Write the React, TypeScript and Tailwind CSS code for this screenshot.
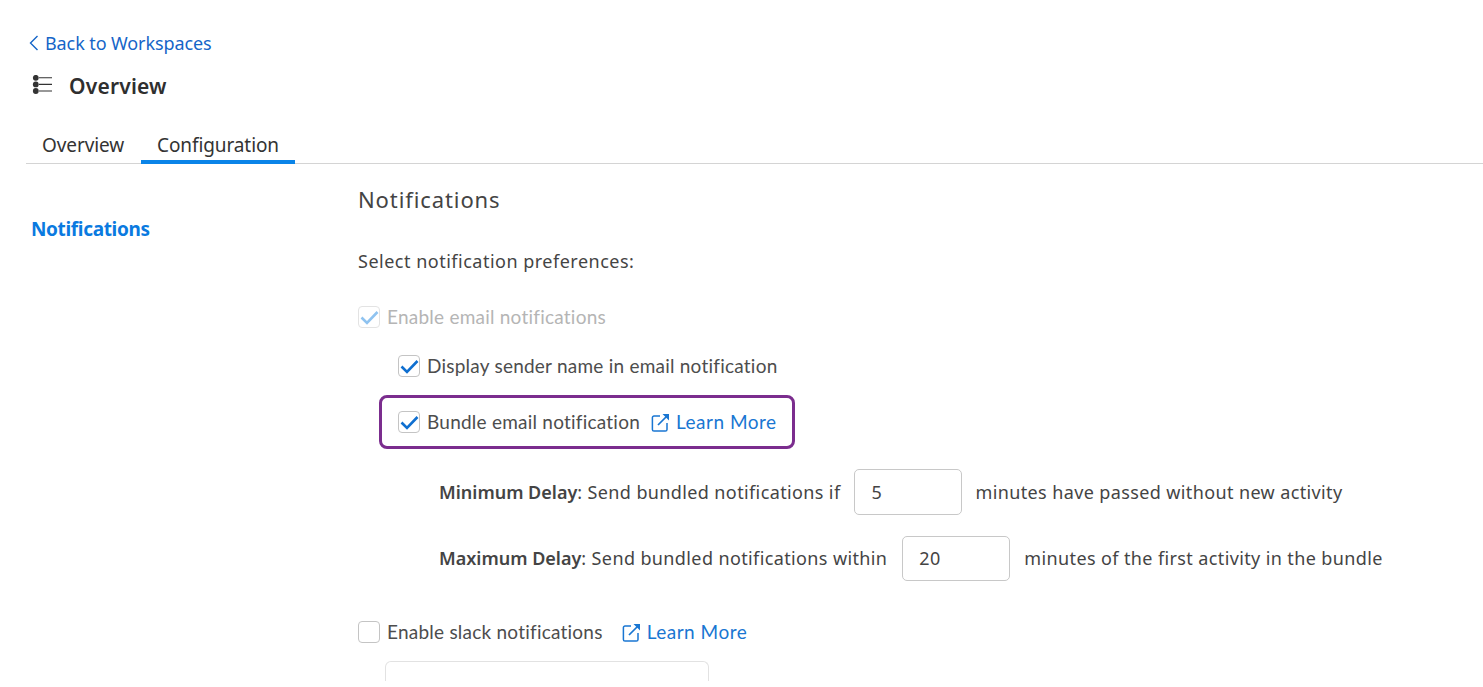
const plex = "font-['Noto_Sans',sans-serif]";
const lato = "font-['Lato',sans-serif]";

const BackChevron = () => (
	<svg width="10" height="16" viewBox="0 0 10 16" fill="none" stroke="currentColor" strokeWidth="1.4" className="ml-[3px]">
		<path d="M8.5 1 L1.5 8 L8.5 15" />
	</svg>
);

const ListIcon = () => (
	<svg width="22" height="22" viewBox="0 0 22 22" className="text-[#333]">
		<circle cx="3.8" cy="2.8" r="2.9" fill="currentColor" />
		<circle cx="3.8" cy="9.4" r="2.9" fill="currentColor" />
		<circle cx="3.8" cy="16" r="2.9" fill="currentColor" />
		<path d="M7 2.8h13M7 9.4h13M7 16h13" stroke="currentColor" strokeWidth="1.1" />
	</svg>
);

const ExternalIcon = () => (
	<svg width="19" height="19" viewBox="0 0 19 19" fill="none" stroke="#1976d2" strokeWidth="1.5">
		<path d="M9 3H3a1.6 1.6 0 0 0-1.6 1.6v11.8A1.6 1.6 0 0 0 3 18h11.4a1.6 1.6 0 0 0 1.6-1.6V10" />
		<path d="M7 12 L16.5 2.5" strokeWidth="1.7" />
		<path d="M11.5 1h6.5v6.5z" fill="#1976d2" stroke="none" />
	</svg>
);

const Check = ({ checked = true, faded = false }: { checked?: boolean; faded?: boolean }) => (
	<span
		className={`flex h-[22px] w-[22px] shrink-0 items-center justify-center rounded-[4px] border bg-white ${faded ? "border-[#e3e3e3]" : "border-[#c4c4c4]"}`}
	>
		{checked && (
			<svg width="19" height="15" viewBox="0 0 19 15" fill="none">
				<path
					d="M1.5 7.5 L7 13 L17.5 2"
					stroke={faded ? "#8fc3f0" : "#0f6fd0"}
					strokeWidth="2.6"
				/>
			</svg>
		)}
	</span>
);

const LearnMore = () => (
	<span className="flex items-center gap-[6px] text-[#1976d2]">
		<ExternalIcon />
		<span className={`${lato} text-[19px] tracking-[0.5px]`}>Learn More</span>
	</span>
);

const DelayInput = ({ value, className }: { value: string; className: string }) => (
	<span
		className={`flex w-[108px] items-center rounded-[5px] border border-[#c8c8c8] pl-[16px] text-[#444] ${className}`}
	>
		{value}
	</span>
);

export default function App() {
	return (
		<div className={`h-[687px] w-[1483px] overflow-hidden bg-white ${plex}`}>
			<div className="pl-[26px]">
				<div className="mt-[33px] flex h-[20px] items-center text-[18px] tracking-[-0.1px] text-[#1565c8]">
					<BackChevron />
					<span className="ml-[6px]">Back to Workspaces</span>
				</div>
				<div className="mt-[21px] flex h-[24px] items-center pl-[6px]">
					<ListIcon />
					<span className="ml-[15px] text-[21px] font-semibold leading-[24px] tracking-[0.2px] text-[#2f2f2f]">Overview</span>
				</div>
				<div className="mt-[30px] flex h-[36px] items-stretch border-b border-[#d4d4d4] text-[19px] tracking-[-0.1px] text-[#333]">
					<span className="flex w-[115px] items-center pb-[1px] pl-[16px]">Overview</span>
					<span className="-mb-px flex w-[154px] items-center justify-center border-b-[4px] border-[#0a84e8] pt-[2px]">
						Configuration
					</span>
				</div>
			</div>
			<div className="flex">
				<div className="w-[358px] shrink-0 pl-[31px] pt-[53px]">
					<span className="text-[19px] font-bold leading-[25px] tracking-[-0.35px] text-[#0a7ae0]">Notifications</span>
				</div>
				<div className="flex-1 pt-[20px] text-[#444]">
					<div className="text-[22px] leading-[30px] tracking-[0.9px] text-[#444]">Notifications</div>
					<div className="mt-[35px] text-[18px] leading-[24px] tracking-[0.5px]">Select notification preferences:</div>

					<div className={`mt-[32px] flex h-[24px] items-center gap-[7px] ${lato} text-[19px] text-[#b5b5b5]`}>
						<Check faded />
						<span className="tracking-[0.23px]">Enable email notifications</span>
					</div>
					<div className={`ml-[40px] mt-[25px] flex h-[24px] items-center gap-[7px] ${lato} text-[19px] text-[#4d4d4d]`}>
						<Check />
						<span className="tracking-[0.23px]">Display sender name in email notification</span>
					</div>
					<div className={`ml-[21px] mt-[17px] flex h-[54px] w-[416px] items-center gap-[7px] rounded-[8px] border-[3px] border-[#7b2d8e] pl-[16px] ${lato} text-[19px] text-[#4d4d4d]`}>
						<Check />
						<span className="tracking-[0.23px]">Bundle email notification</span>
						<span className="ml-[4px]"><LearnMore /></span>
					</div>

					<div className="ml-[81px] mt-[20px] flex h-[46px] items-center text-[18px] tracking-[0.38px]">
						<span><b className="font-semibold tracking-normal">Minimum Delay</b>: Send bundled notifications if</span>
						<DelayInput value="5" className="ml-[14px] h-[46px]" />
						<span className="ml-[13px]">minutes have passed without new activity</span>
					</div>
					<div className="ml-[81px] mt-[21px] flex h-[45px] items-center text-[18px] tracking-[0.38px]">
						<span><b className="font-semibold tracking-normal">Maximum Delay</b>: Send bundled notifications within</span>
						<DelayInput value="20" className="ml-[15px] h-[45px]" />
						<span className="ml-[14px]">minutes of the first activity in the bundle</span>
					</div>

					<div className={`mt-[39px] flex h-[24px] items-center gap-[7px] ${lato} text-[19px] text-[#4d4d4d]`}>
						<Check checked={false} />
						<span className="tracking-[0.23px]">Enable slack notifications</span>
						<span className="ml-[12px]"><LearnMore /></span>
					</div>
					<div className="ml-[27px] mt-[17px] h-[20px] w-[324px] rounded-t-[6px] border border-b-0 border-[#e2e2e2]" />
				</div>
			</div>
		</div>
	);
}
